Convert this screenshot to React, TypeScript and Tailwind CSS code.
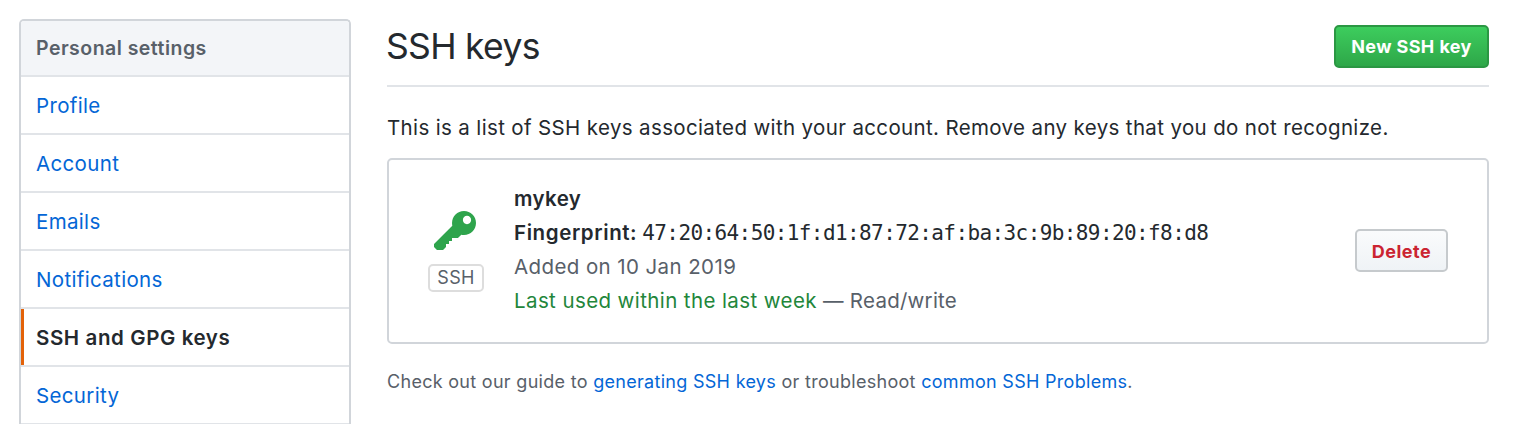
const navItems = ["Profile", "Account", "Emails", "Notifications", "SSH and GPG keys", "Security"];

function KeyIcon() {
  return (
    <svg width="42" height="48" viewBox="0 0 14 16" fill="currentColor" className="mr-[2px] block text-[#2ea44c]" aria-hidden="true">
      <path
        fillRule="evenodd"
        d="M12.83 2.17C12.08 1.42 11.14 1.03 10 1c-1.13.03-2.08.42-2.83 1.17S6.04 3.86 6.01 5c0 .3.03.59.09.89L0 12v1l1 1h2l1-1v-1h1v-1h1v-1h2l1.09-1.11c.3.08.59.11.91.11 1.14-.03 2.08-.42 2.83-1.17S13.97 6.14 14 5c-.03-1.14-.42-2.08-1.17-2.83zM11 5.38c-.77 0-1.38-.61-1.38-1.38 0-.77.61-1.38 1.38-1.38.77 0 1.38.61 1.38 1.38 0 .77-.61 1.38-1.38 1.38z"
      />
    </svg>
  );
}

function Sidebar() {
  return (
    <nav className="h-[410px] w-[332px] shrink-0 overflow-hidden rounded-t-[5px] border-2 border-b-0 border-[#d1d5da] text-[20.5px]">
      <h3 className="flex h-14 items-center border-b-2 border-[#e1e4e8] bg-[#f3f5f8] pt-px pl-[15px] text-[19.5px] font-semibold tracking-[0.47px] text-[#586069]">
        <span>Personal settings</span>
      </h3>
      {navItems.map((item) =>
        item === "SSH and GPG keys" ? (
          <a key={item} className="flex h-[58px] items-center border-b-2 border-[#e1e4e8] pt-[3px] pl-[15px] font-semibold tracking-[0.6px] text-[#24292e] shadow-[inset_3px_0_0_#e36209]">
            <span>{item}</span>
          </a>
        ) : (
          <a key={item} className="flex h-[58px] items-center border-b-2 border-[#e1e4e8] pt-[3px] pl-[15px] tracking-[0.34px] text-[#0366d6]">
            <span>{item}</span>
          </a>
        ),
      )}
    </nav>
  );
}

function KeyCard() {
  return (
    <section className="mt-[15px] flex h-[186px] items-center rounded-[5px] border-2 border-[#d1d5da] pr-[39px] pb-[2px] pl-[39px]">
      <div className="flex w-14 flex-col items-center">
        <KeyIcon />
        <span className="mt-2 flex h-7 w-14 items-center justify-center rounded-[5px] border-2 border-[#dddddd] pb-px text-[18px] tracking-[0.3px] text-[#586069]">SSH</span>
      </div>
      <div className="ml-[30px] flex-1 text-[20.5px] leading-[34px] tracking-[0.4px] whitespace-nowrap text-[#586069]">
        <div className="font-semibold text-[#24292e]">mykey</div>
        <div className="flex text-[#24292e]">
          <span className="font-semibold tracking-[0.6px]">Fingerprint:</span>
          <code className="ml-[5px] font-['DejaVu_Sans_Mono',monospace] text-[21px] tracking-[-0.6px]">47:20:64:50:1f:d1:87:72:af:ba:3c:9b:89:20:f8:d8</code>
        </div>
        <div>Added on 10 Jan 2019</div>
        <div>
          <span className="text-[#22863a]">Last used within the last week</span> <span className="tracking-[0.25px]">— Read/write</span>
        </div>
      </div>
      <button className="h-[43px] w-[93px] rounded-[5px] border-2 border-[#c6cacd] bg-linear-to-b from-[#fafbfc] to-[#eff3f6] pt-[2px] text-[18px] font-bold tracking-[0.5px] text-[#cb2431]">
        Delete
      </button>
    </section>
  );
}

export default function App() {
  return (
    <div className="flex h-[424px] overflow-hidden bg-white pt-[19px] pr-[29px] pl-[19px] font-['Inter',sans-serif] text-[#24292e]">
      <Sidebar />
      <main className="ml-9 min-w-0 flex-1">
        <header className="flex h-[68px] items-start justify-between border-b-2 border-[#e1e4e8]">
          <h1 className="-ml-px text-[35.5px] leading-[55px] tracking-[-0.7px]"><span>SSH keys</span></h1>
          <button className="mt-[6px] h-[43px] w-[155px] rounded-[5px] border-2 border-[#2b9743] bg-linear-to-b from-[#3dcd5d] to-[#2ea749] text-[18px] font-bold tracking-[0.4px] text-white">
            New SSH key
          </button>
        </header>
        <p className="mt-[26px] text-[20.5px] leading-[30px] tracking-[0.36px] whitespace-nowrap"><span>This is a list of SSH keys associated with your account. Remove any keys that you do not recognize.</span></p>
        <KeyCard />
        <p className="mt-6 text-[18px] leading-7 tracking-[0.295px] whitespace-nowrap text-[#586069]">
          Check out our guide to <a className="text-[#0366d6]">generating SSH keys</a> or troubleshoot{" "}
          <a className="text-[#0366d6]">common SSH Problems</a>.
        </p>
      </main>
    </div>
  );
}
